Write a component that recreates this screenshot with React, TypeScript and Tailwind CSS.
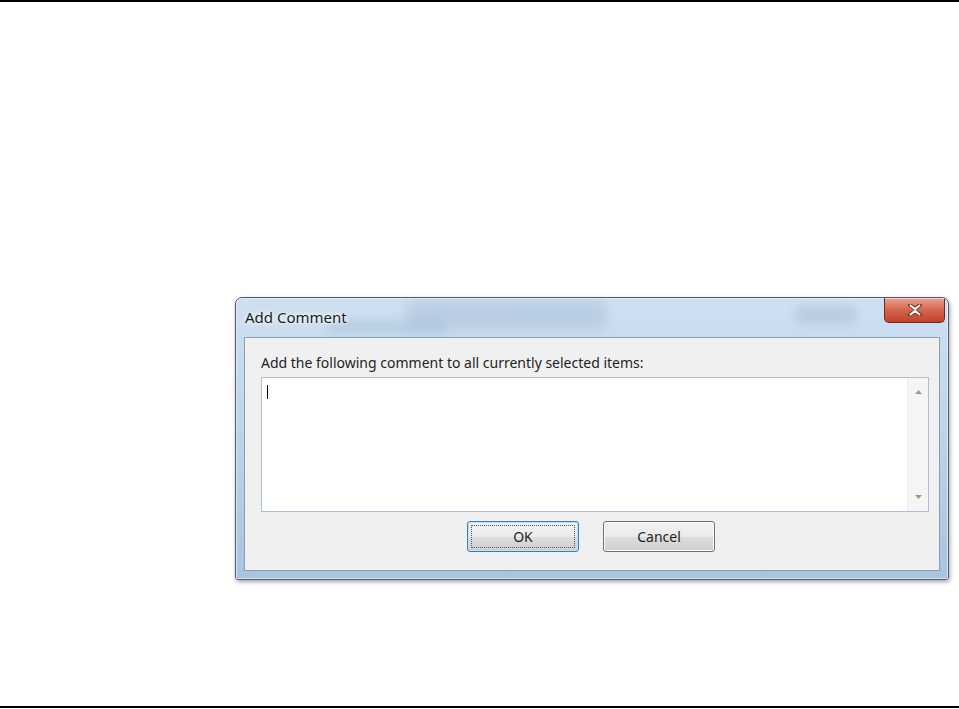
import React from "react";

export default function App() {
  const font = { fontFamily: '"Noto Sans", "Open Sans", "DejaVu Sans", sans-serif' };
  return (
    <div className="w-[959px] h-[709px] bg-white flex flex-col overflow-hidden" style={font}>
      <div className="h-[2px] bg-black shrink-0" />
      <div className="flex-1 pl-[235px] pt-[295px]">
        {/* Window frame */}
        <div className="relative w-[714px] h-[283px] rounded-t-[7px] rounded-b-[3px] border border-[#4d5c6e] bg-gradient-to-b from-[#cfe0f2] via-[#bcd3ea] to-[#a9c4e0] shadow-[1px_2px_4px_rgba(0,0,0,0.35)] flex flex-col overflow-hidden">
          {/* glassy ghost shapes */}
          <div className="absolute left-[170px] top-[2px] w-[200px] h-[30px] bg-[#9fb6cf] opacity-40 blur-[6px] rounded" />
          <div className="absolute left-[560px] top-[8px] w-[60px] h-[18px] bg-[#a7bcd3] opacity-50 blur-[5px] rounded" />
          <div className="absolute left-[90px] top-[22px] w-[120px] h-[14px] bg-[#a9c0d8] opacity-50 blur-[5px] rounded" />
          <div className="absolute inset-0 rounded-t-[6px] border border-[#e9f1fa] opacity-70 pointer-events-none" />
          {/* title bar */}
          <div className="relative h-[39px] shrink-0 flex items-start pl-[9px] pt-[9px]">
            <span className="text-[15px] text-[#1b1b1b] leading-[20px] [text-shadow:0_0_6px_#ffffff,0_0_3px_#ffffff]">Add Comment</span>
          </div>
          {/* close button */}
          <div className="absolute right-[3px] top-0 w-[61px] h-[25px] rounded-b-[5px] border border-[#6e2a1f] border-t-0 bg-gradient-to-b from-[#e9a493] via-[#d4644c] to-[#c2412a] flex items-center justify-center shadow-[inset_0_1px_0_rgba(255,255,255,0.5)]">
            <svg width="14" height="12" viewBox="0 0 14 12">
              <path d="M2 1 L7 5 L12 1 M2 11 L7 7 L12 11 M7 5 L7 7" stroke="#5a1d12" strokeWidth="3.6" fill="none" strokeLinecap="round" />
              <path d="M2.5 1.5 L7 5.2 L11.5 1.5 M2.5 10.5 L7 6.8 L11.5 10.5" stroke="#ffffff" strokeWidth="2.2" fill="none" strokeLinecap="round" />
            </svg>
          </div>
          {/* client area */}
          <div className="relative mx-[8px] h-[234px] border border-[#8a9db3] bg-[#f0f0f0] flex flex-col">
            <div className="pl-[16px] pt-[16px] h-[39px] text-[14px] leading-[18px] text-[#1e1e1e]">
              Add the following comment to all currently selected items:
            </div>
            <div className="ml-[16px] w-[668px] h-[135px] border border-[#abbfd4] bg-white flex">
              <div className="flex-1 pl-[5px] pt-[7px]">
                <div className="w-[1px] h-[14px] bg-black" />
              </div>
              <div className="w-[21px] bg-[#f5f5f5] border-l border-[#ececec] flex flex-col items-center justify-between py-[12px]">
                <svg width="7" height="4" viewBox="0 0 7 4"><path d="M0 4 L3.5 0 L7 4 Z" fill="#9a9a9a" /></svg>
                <svg width="7" height="4" viewBox="0 0 7 4"><path d="M0 0 L3.5 4 L7 0 Z" fill="#9a9a9a" /></svg>
              </div>
            </div>
            <div className="flex pl-[222px] pt-[9px] gap-[24px]">
              <div className="w-[112px] h-[31px] rounded-[3px] border border-[#3c7fb1] shadow-[inset_0_0_0_1px_#b9e2f8] bg-[linear-gradient(to_bottom,#f2f2f2_0%,#ebebeb_50%,#dddddd_51%,#cfcfcf_100%)] flex items-center justify-center p-[3px]">
                <div className="w-full h-full border border-dotted border-[#555] flex items-center justify-center text-[14px] text-[#1e1e1e]">OK</div>
              </div>
              <div className="w-[112px] h-[31px] rounded-[3px] border border-[#707070] shadow-[inset_0_0_0_1px_#fcfcfc] bg-[linear-gradient(to_bottom,#f2f2f2_0%,#ebebeb_50%,#dddddd_51%,#cfcfcf_100%)] flex items-center justify-center text-[14px] text-[#1e1e1e]">
                Cancel
              </div>
            </div>
          </div>
        </div>
      </div>
      <div className="h-[2px] bg-black shrink-0 mb-[1px]" />
    </div>
  );
}
